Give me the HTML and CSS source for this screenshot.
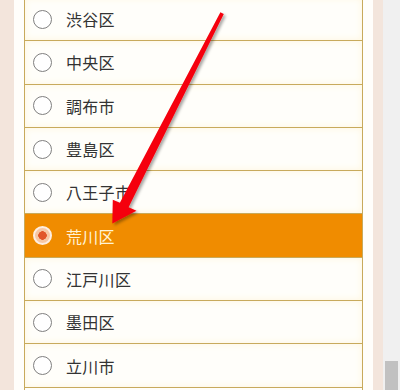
FILE: index.html
```html
<!DOCTYPE html>
<html lang="ja">
<head>
<meta charset="utf-8">
<link rel="stylesheet" href="styles.css">
</head>
<body>
<div class="page">
  <div class="side side-left"></div>
  <div class="gutter"></div>
  <ul class="list">
    <li class="row"><span class="radio"></span><span class="label">渋谷区</span></li>
    <li class="row"><span class="radio"></span><span class="label">中央区</span></li>
    <li class="row"><span class="radio"></span><span class="label">調布市</span></li>
    <li class="row"><span class="radio"></span><span class="label">豊島区</span></li>
    <li class="row"><span class="radio"></span><span class="label">八王子市</span></li>
    <li class="row selected"><span class="radio"></span><span class="label">荒川区</span></li>
    <li class="row"><span class="radio"></span><span class="label">江戸川区</span></li>
    <li class="row"><span class="radio"></span><span class="label">墨田区</span></li>
    <li class="row"><span class="radio"></span><span class="label">立川市</span></li>
  </ul>
  <div class="gutter"></div>
  <div class="side side-right"></div>
  <div class="scrollbar"><div class="thumb"></div></div>
</div>
<svg class="arrow" width="400" height="390" viewBox="0 0 400 390">
  <defs>
    <filter id="sh" x="-20%" y="-20%" width="140%" height="140%">
      <feDropShadow dx="2" dy="2" stdDeviation="1.6" flood-color="#000" flood-opacity="0.35"/>
    </filter>
  </defs>
  <polygon filter="url(#sh)" fill="#f5000c"
    points="223.8,14 128.6,207.3 136.5,210.8 112.3,223.5 112.8,199.8 119.9,202.7 220.4,12.2"/>
</svg>
</body>
</html>
```

FILE: styles.css
```css
html, body {
  margin: 0;
  padding: 0;
  background: #ffffff;
  overflow: hidden;
}
body {
  position: relative;
  width: 400px;
  height: 390px;
  font-family: "Noto Sans CJK JP", "Noto Sans", sans-serif;
}
.page {
  display: flex;
  height: 390px;
  overflow: hidden;
}
.side {
  flex: none;
  background: #f3e5dc;
}
.side-left { width: 14px; }
.side-right { width: 10px; }
.gutter {
  flex: none;
  width: 10px;
  background: #fffefb;
}
.list {
  flex: none;
  width: 337px;
  margin: -2px 0 0 0;
  padding: 0;
  list-style: none;
  border-left: 1px solid #c8aa5c;
  border-right: 1px solid #c8aa5c;
  background: #fffefa;
}
.row {
  display: flex;
  align-items: center;
  height: 42.3px;
  border-bottom: 1px solid #c8aa5c;
  padding-left: 8px;
  box-shadow: inset 0 0 7px #fff6dc;
}
.radio {
  flex: none;
  box-sizing: border-box;
  width: 19px;
  height: 19px;
  border: 1px solid #7f7f7f;
  border-radius: 50%;
  background: #ffffff;
  margin-right: 14px;
}
.label {
  font-size: 16px;
  color: #333333;
  letter-spacing: 0.3px;
}
.selected {
  background: #f08c00;
  box-shadow: none;
}
.selected .label {
  color: #fff3d6;
}
.selected .radio {
  border: 2px solid #fdeee2;
  background: radial-gradient(circle, #e1562b 0 4px, #f7c7a4 4.5px 100%);
}
.scrollbar {
  flex: none;
  width: 17px;
  background: #f0f0f0;
  display: flex;
  flex-direction: column;
  justify-content: flex-end;
  padding-left: 2px;
  box-sizing: border-box;
}
.thumb {
  width: 13px;
  height: 29px;
  background: #c1c1c1;
}
.arrow {
  position: absolute;
  left: 0;
  top: 0;
  pointer-events: none;
}
```
